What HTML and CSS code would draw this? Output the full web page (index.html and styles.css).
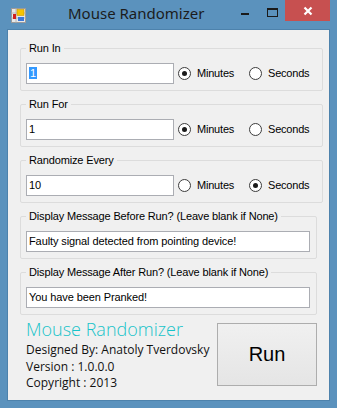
FILE: index.html
```html
<!DOCTYPE html>
<html lang="en">
<head>
  <meta charset="UTF-8" />
  <title>Mouse Randomizer</title>
  <link rel="stylesheet" href="styles.css">
</head>
<body>

  <div class="window">
    <div class="titlebar">
      <svg class="app-icon" width="15" height="15" viewBox="0 0 15 15">
        <rect x="0.5" y="0.5" width="14" height="14" fill="#e8e8e8" stroke="#9a9a9a"/>
        <line x1="0.5" y1="5" x2="14.5" y2="5" stroke="#b8b8b8"/>
        <line x1="0.5" y1="10" x2="14.5" y2="10" stroke="#b8b8b8"/>
        <line x1="5" y1="0.5" x2="5" y2="14.5" stroke="#b8b8b8"/>
        <rect x="2" y="6" width="3" height="5" fill="#d02020"/>
        <rect x="6" y="1.5" width="7" height="6" fill="#f6c400" stroke="#c89a00" stroke-width="0.6"/>
        <rect x="7" y="9" width="6" height="4" fill="#3b78d8"/>
      </svg>
      <span class="title">Mouse Randomizer</span>
      <div class="caption-buttons">
        <span class="btn-min"></span>
        <span class="btn-max"></span>
        <span class="btn-close">
          <svg width="10" height="10" viewBox="0 0 10 10">
            <path d="M1.5 1.5 L8.5 8.5 M8.5 1.5 L1.5 8.5" stroke="#fff" stroke-width="2.2"/>
          </svg>
        </span>
      </div>
    </div>

    <div class="client">
      <fieldset class="group">
        <legend>Run In</legend>
        <div class="row">
          <div class="textbox short"><span class="selected">1</span></div>
          <span class="radio"><span class="dot on"></span>Minutes</span>
          <span class="radio"><span class="dot"></span>Seconds</span>
        </div>
      </fieldset>

      <fieldset class="group">
        <legend>Run For</legend>
        <div class="row">
          <div class="textbox short">1</div>
          <span class="radio"><span class="dot on"></span>Minutes</span>
          <span class="radio"><span class="dot"></span>Seconds</span>
        </div>
      </fieldset>

      <fieldset class="group">
        <legend>Randomize Every</legend>
        <div class="row">
          <div class="textbox short">10</div>
          <span class="radio"><span class="dot"></span>Minutes</span>
          <span class="radio"><span class="dot on"></span>Seconds</span>
        </div>
      </fieldset>

      <fieldset class="group">
        <legend>Display Message Before Run? (Leave blank if None)</legend>
        <div class="row">
          <div class="textbox wide">Faulty signal detected from pointing device!</div>
        </div>
      </fieldset>

      <fieldset class="group">
        <legend>Display Message After Run? (Leave blank if None)</legend>
        <div class="row">
          <div class="textbox wide">You have been Pranked!</div>
        </div>
      </fieldset>

      <div class="footer-row">
        <div class="about">
          <div class="app-name">Mouse Randomizer</div>
          <p>Designed By: Anatoly Tverdovsky</p>
          <p>Version : 1.0.0.0</p>
          <p>Copyright : 2013</p>
        </div>
        <button class="run">Run</button>
      </div>
    </div>
  </div>

</body>
</html>
```

FILE: styles.css
```css
body {
  margin: 0;
  background-color: #5b92bd;
  font-family: "Liberation Sans", Arial, sans-serif;
  font-size: 11px;
  color: #000;
}
.window {
  width: 337px;
  height: 408px;
  padding: 0 7px;
  box-sizing: border-box;
}
.titlebar {
  height: 29px;
  display: flex;
  align-items: flex-start;
}
.app-icon {
  margin: 8px 0 0 4px;
}
.title {
  font-family: "Noto Sans", "Open Sans", sans-serif;
  font-size: 15px;
  color: #1c1c1c;
  margin: 3px 0 0 42px;
}
.caption-buttons {
  margin-left: auto;
  margin-right: -7px;
  display: flex;
  align-items: flex-start;
}
.btn-min {
  width: 8px;
  height: 2px;
  background: #1a1a1a;
  margin: 13px 18px 0 0;
}
.btn-max {
  width: 9px;
  height: 6px;
  border: 1px solid #1a1a1a;
  border-top-width: 2px;
  margin: 8px 7px 0 0;
}
.btn-close {
  width: 45px;
  height: 21px;
  background: #c75050;
  display: flex;
  align-items: center;
  justify-content: center;
  margin-right: 7px;
}
.client {
  height: 372px;
  box-sizing: border-box;
  background: #f0f0f0;
  border: 1px solid #4d82ac;
  padding: 12px 12px 0;
  display: flex;
  flex-direction: column;
  gap: 7px;
}
.group {
  margin: 0;
  padding: 0 6px 6px 5px;
  border: 1px solid #dcdcdc;
  border-radius: 2px;
}
.group legend {
  padding: 0 3px;
  line-height: 13px;
  letter-spacing: -0.15px;
}
.row {
  display: flex;
  align-items: center;
  margin-top: 7px;
  height: 22px;
}
.textbox {
  height: 21px;
  box-sizing: border-box;
  border: 1px solid #abadb3;
  background: #fff;
  padding: 0 2px;
  line-height: 19px;
  font-size: 11px;
  letter-spacing: -0.1px;
  white-space: nowrap;
}
.textbox.short {
  width: 148px;
}
.textbox.wide {
  width: 284px;
}
.selected {
  background: #3399ff;
  color: #fff;
  padding: 0 1px;
}
.radio {
  display: flex;
  align-items: center;
  margin-left: 4px;
  width: 67px;
  letter-spacing: -0.2px;
}
.dot {
  width: 13px;
  height: 13px;
  box-sizing: border-box;
  border: 1px solid #3c3c3c;
  border-radius: 50%;
  background: #fff;
  margin-right: 6px;
  display: flex;
  align-items: center;
  justify-content: center;
}
.dot.on::after {
  content: "";
  width: 5px;
  height: 5px;
  border-radius: 50%;
  background: #1a1a1a;
}
.footer-row {
  display: flex;
  margin-top: 1px;
}
.about {
  padding-left: 6px;
  font-family: "Open Sans", sans-serif;
  font-size: 12px;
  color: #111;
}
.app-name {
  font-size: 18px;
  font-weight: 300;
  color: #17c3c9;
  line-height: 25px;
  margin-top: -6px;
}
.about p {
  margin: 0;
  line-height: 16.7px;
}
.run {
  margin-left: auto;
  width: 100px;
  height: 63px;
  border: 1px solid #adadad;
  background: linear-gradient(#f0f0f0, #e5e5e5);
  font-family: "Liberation Sans", Arial, sans-serif;
  font-size: 20px;
  color: #000;
  cursor: pointer;
}
```
